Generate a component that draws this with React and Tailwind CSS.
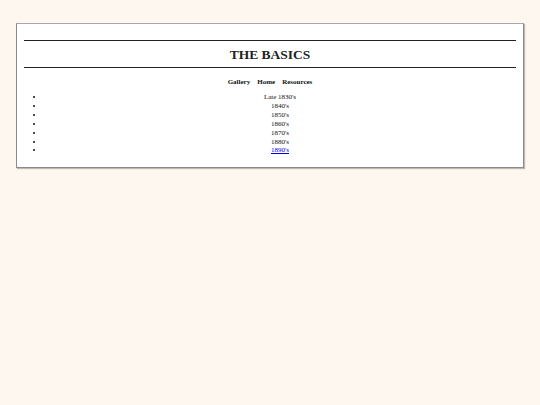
export default function App() {
  const items = ["Late 1830's", "1840's", "1850's", "1860's", "1870's", "1880's"];
  return (
    <div className="min-h-[405px] bg-[#fdf7f0] pt-[23px] px-[16px] font-['Liberation_Serif',serif] text-[#111]">
      <div className="border border-[#8a8a8a] border-t-[#a8a8a8] bg-white px-[7px] pt-[16px] pb-[12px] shadow-[1px_1px_1px_rgba(0,0,0,0.25)]">
        <div className="h-[28px] border-t border-b border-[#222] flex items-center justify-center pt-[1px]">
          <h1 className="text-[13.5px] font-bold leading-none text-[#222]">THE BASICS</h1>
        </div>
        <nav className="mt-[10px] flex justify-center gap-[7px] text-[7px] font-bold leading-[9px]">
          <span>Gallery</span>
          <span>Home</span>
          <span>Resources</span>
        </nav>
        <ul className="mt-[6px] list-disc pl-[20px] text-center text-[7px] leading-[8.9px]">
          {items.map((t) => (
            <li key={t}>{t}</li>
          ))}
          <li>
            <a href="#" className="text-[#0000ee] underline">1890's</a>
          </li>
        </ul>
      </div>
    </div>
  );
}
